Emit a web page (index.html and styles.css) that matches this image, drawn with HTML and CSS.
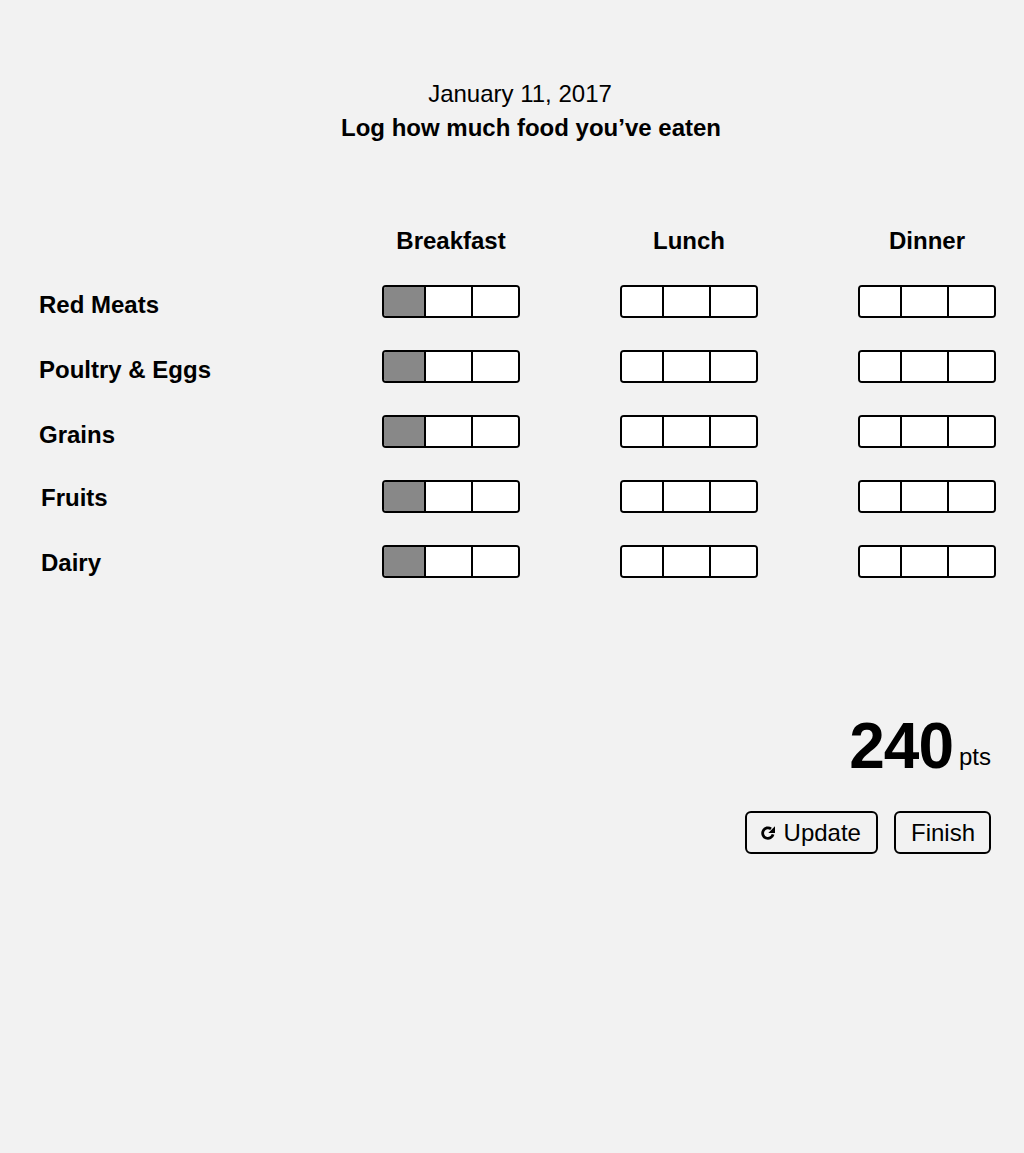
FILE: index.html
```html
<!DOCTYPE html>
<html lang="en">
<head>
<meta charset="utf-8">
<title>Food Log</title>
<link rel="stylesheet" href="styles.css">
</head>
<body>
<main class="page">
  <header class="intro">
    <div class="date">January 11, 2017</div>
    <h1 class="title">Log how much food you’ve eaten</h1>
  </header>

  <section class="log">
    <div class="corner"></div>
    <div class="meal">Breakfast</div>
    <div class="meal">Lunch</div>
    <div class="meal">Dinner</div>

    <div class="food">Red Meats</div>
    <div class="bar"><span class="cell filled"></span><span class="cell"></span><span class="cell"></span></div>
    <div class="bar"><span class="cell"></span><span class="cell"></span><span class="cell"></span></div>
    <div class="bar"><span class="cell"></span><span class="cell"></span><span class="cell"></span></div>

    <div class="food">Poultry &amp; Eggs</div>
    <div class="bar"><span class="cell filled"></span><span class="cell"></span><span class="cell"></span></div>
    <div class="bar"><span class="cell"></span><span class="cell"></span><span class="cell"></span></div>
    <div class="bar"><span class="cell"></span><span class="cell"></span><span class="cell"></span></div>

    <div class="food">Grains</div>
    <div class="bar"><span class="cell filled"></span><span class="cell"></span><span class="cell"></span></div>
    <div class="bar"><span class="cell"></span><span class="cell"></span><span class="cell"></span></div>
    <div class="bar"><span class="cell"></span><span class="cell"></span><span class="cell"></span></div>

    <div class="food food-shift">Fruits</div>
    <div class="bar"><span class="cell filled"></span><span class="cell"></span><span class="cell"></span></div>
    <div class="bar"><span class="cell"></span><span class="cell"></span><span class="cell"></span></div>
    <div class="bar"><span class="cell"></span><span class="cell"></span><span class="cell"></span></div>

    <div class="food food-shift">Dairy</div>
    <div class="bar"><span class="cell filled"></span><span class="cell"></span><span class="cell"></span></div>
    <div class="bar"><span class="cell"></span><span class="cell"></span><span class="cell"></span></div>
    <div class="bar"><span class="cell"></span><span class="cell"></span><span class="cell"></span></div>
  </section>

  <section class="summary">
    <div class="score"><span class="score-num">240</span><span class="score-unit">pts</span></div>
    <div class="actions">
      <button class="btn btn-update" type="button">
        <svg class="btn-icon" viewBox="0 0 13 13" width="14" height="14" aria-hidden="true">
          <path d="M11.2 7.8A4.9 4.9 0 1 1 9.3 2.6" fill="none" stroke="#000" stroke-width="2.6"/>
          <path d="M13 0.2V6.5H6.8z" fill="#000"/>
        </svg>
        <span>Update</span>
      </button>
      <button class="btn btn-finish" type="button">Finish</button>
    </div>
  </section>
</main>
</body>
</html>
```

FILE: styles.css
```css
html, body {
  margin: 0;
  padding: 0;
  background: #f2f2f2;
}

body {
  font-family: "Liberation Sans", Arial, sans-serif;
  color: #000;
  min-height: 1153px;
}

.page {
  padding: 77px 0 0 38px;
}

.intro {
  display: flex;
  flex-direction: column;
  align-items: center;
  line-height: 34px;
  font-size: 24px;
}

.date {
  font-weight: normal;
  margin-right: 22px;
}

.title {
  margin: 0;
  font-size: 24px;
  font-weight: bold;
  line-height: 34px;
}

.log {
  display: grid;
  grid-template-columns: 344px 238px 238px 138px;
  grid-template-rows: 58px repeat(5, 65px);
  margin-top: 82px;
}

.meal {
  font-size: 24px;
  font-weight: bold;
  line-height: 28px;
  width: 138px;
  text-align: center;
  white-space: nowrap;
}

.food {
  font-size: 24px;
  font-weight: bold;
  line-height: 33px;
  padding-top: 3px;
  padding-left: 1px;
  white-space: nowrap;
}

.food-shift {
  padding-top: 1px;
  padding-left: 3px;
}

.bar {
  display: flex;
  width: 138px;
  height: 33px;
  box-sizing: border-box;
  border: 2px solid #000;
  border-radius: 4px;
  background: #fff;
  overflow: hidden;
}

.cell {
  flex: 0 0 45px;
  height: 100%;
  border-left: 2px solid #000;
  background: #fff;
}

.cell:first-child {
  flex: 0 0 40px;
  border-left: none;
}

.cell.filled {
  background: #888;
}

.summary {
  display: flex;
  flex-direction: column;
  align-items: flex-end;
  margin-top: 104px;
  padding-right: 33px;
}

.score {
  font-size: 64px;
  font-weight: bold;
  line-height: 64px;
  white-space: nowrap;
}

.score-num {
  letter-spacing: -1px;
}

.score-unit {
  font-size: 24px;
  font-weight: normal;
  line-height: 1;
  margin-left: 6px;
  vertical-align: 3px;
}

.actions {
  display: flex;
  gap: 16px;
  margin-top: 33px;
}

.btn {
  display: flex;
  align-items: center;
  height: 43px;
  box-sizing: border-box;
  padding: 0 14px;
  border: 2px solid #000;
  border-radius: 6px;
  background: #f2f2f2;
  font-family: "Liberation Sans", Arial, sans-serif;
  font-size: 24px;
  line-height: 27px;
  color: #000;
}

.btn-finish {
  padding: 0 14px 0 15px;
}

.btn-update {
  padding: 0 15px 0 14px;
}

.btn-icon {
  width: 14px;
  height: 14px;
  margin-right: 9px;
  margin-top: 1px;
}
```
